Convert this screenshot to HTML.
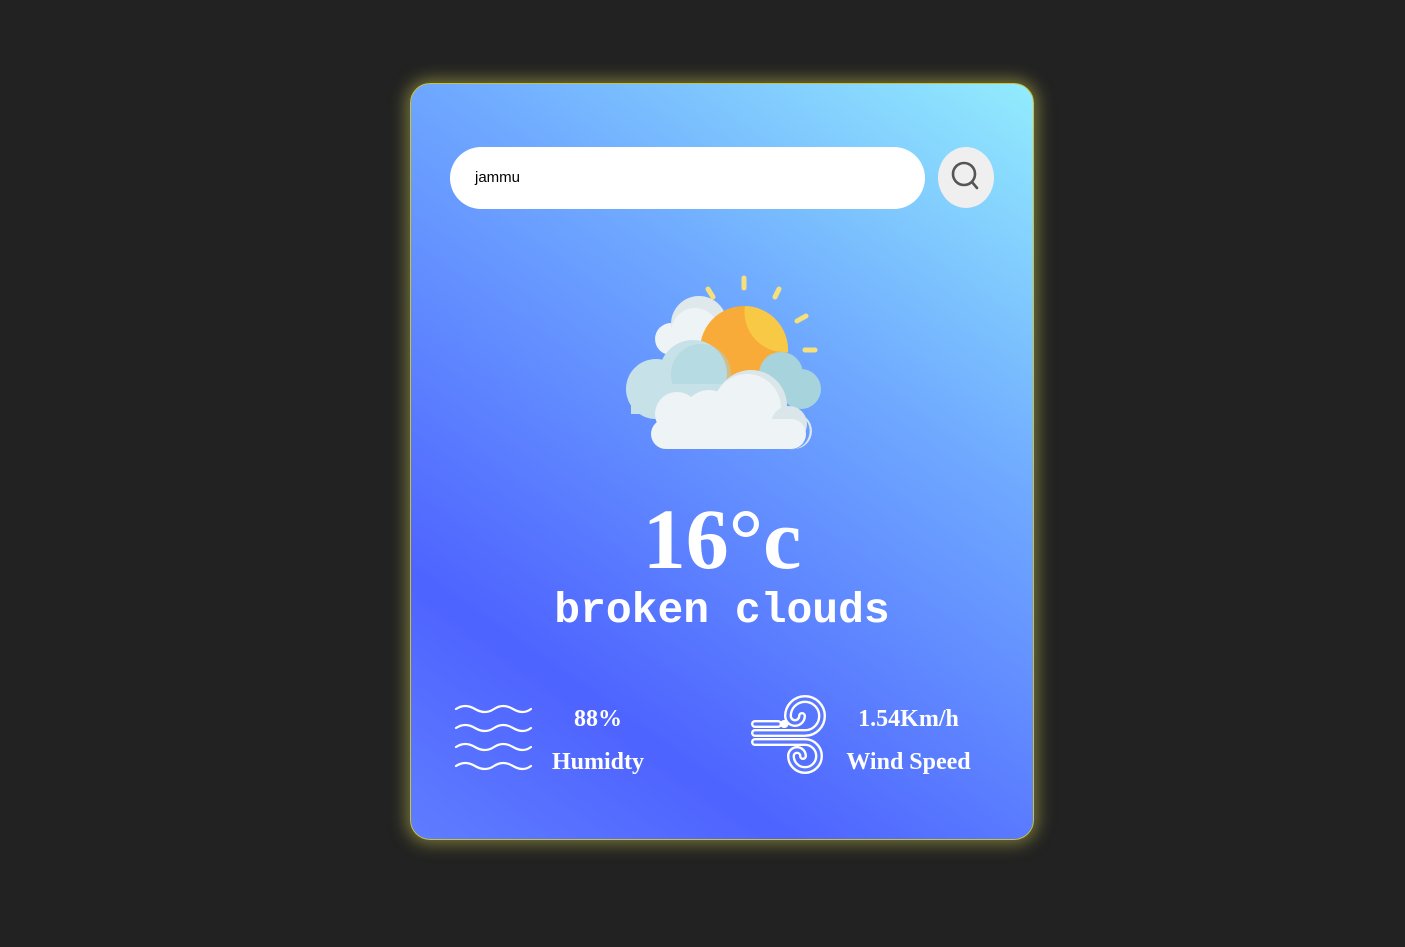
<!DOCTYPE html>
<html><head><style>
html,body{margin:0;padding:0;}
body{width:1405px;height:947px;background:#222222;position:relative;overflow:hidden;font-family:"Liberation Serif",serif;}
.card{position:absolute;left:410px;top:83px;width:622px;height:755px;border:1px solid #c9c23a;border-radius:20px;
background:linear-gradient(215deg,#92ecfd 0%,#6fa9ff 35%,#4e63ff 78%,#5f7dff 100%);box-shadow:0 0 16px 4px rgba(200,195,80,0.5);}
.inp{position:absolute;left:39px;top:63px;width:475px;height:62px;border-radius:31px;background:#fff;}
.inp span{position:absolute;left:25px;top:22px;font:15px "Liberation Sans",sans-serif;color:#000;}
.btn{position:absolute;left:527px;top:63px;width:56px;height:61px;border-radius:50%;background:#efefef;}
.t{position:absolute;color:#fff;font-weight:bold;text-align:center;white-space:nowrap;}
</style></head><body>
<div class="card">
<div class="inp"><span>jammu</span></div>
<div class="btn"><svg width="56" height="61" viewBox="0 0 56 61"><circle cx="26" cy="27" r="11" fill="none" stroke="#555" stroke-width="2.6"/><line x1="34" y1="35" x2="39" y2="41" stroke="#555" stroke-width="2.6" stroke-linecap="round"/></svg></div>
<svg style="position:absolute;left:200px;top:180px" width="240" height="200" viewBox="0 0 240 200">
<g stroke="#f7e07a" stroke-width="5" stroke-linecap="round">
<line x1="133" y1="14" x2="133" y2="24"/><line x1="97" y1="25" x2="102" y2="33"/><line x1="168" y1="25" x2="164" y2="33"/><line x1="195" y1="52" x2="186" y2="57"/><line x1="204" y1="86" x2="194" y2="86"/></g>
<circle cx="60" cy="75" r="16" fill="#eef3f5"/><circle cx="88" cy="60" r="28" fill="#dfe9ec"/><circle cx="84" cy="68" r="24" fill="#eef3f5"/>
<circle cx="133" cy="86" r="44" fill="#f9ab3a"/>
<path d="M134 42 a44 44 0 0 1 43 46 a40 40 0 0 1 -43 -46z" fill="#f8c944"/>
<circle cx="190" cy="125" r="20" fill="#a7d4dc"/><circle cx="170" cy="110" r="22" fill="#a7d4dc"/>
<circle cx="45" cy="125" r="30" fill="#c6e2e8"/><circle cx="82" cy="110" r="34" fill="#c6e2e8"/><circle cx="90" cy="110" r="30" fill="#a7d4dc" opacity="0.5"/>
<rect x="20" y="120" width="110" height="30" fill="#c6e2e8"/>
<circle cx="66" cy="150" r="22" fill="#eef3f5"/><circle cx="140" cy="142" r="36" fill="#dbe6ea"/><circle cx="136" cy="144" r="34" fill="#eef3f5"/>
<circle cx="98" cy="152" r="26" fill="#eef3f5"/><circle cx="178" cy="160" r="18" fill="#dbe6ea"/>
<rect x="40" y="155" width="155" height="30" rx="15" fill="#eef3f5"/>
<path d="M178 185 a18 18 0 0 0 5 -36 a18 18 0 0 1 0 36z" fill="#dbe6ea"/>
</svg>
<div class="t" style="left:0;width:622px;top:405px;font-size:86px;line-height:100px;">16°c</div>
<div class="t" style="left:0;width:622px;top:502px;font:bold 43px 'Liberation Mono',monospace;line-height:50px;">broken clouds</div>
<svg style="position:absolute;left:43px;top:618px" width="80" height="70" viewBox="0 0 80 70">
<g fill="none" stroke="#fff" stroke-width="2.2" stroke-linecap="round">
<path id="w" d="M2 7 q9 -6 19 0 t19 0 t19 0 t18 0"/>
<use href="#w" y="19"/><use href="#w" y="38"/><use href="#w" y="57"/></g></svg>
<div class="t" style="left:130px;width:114px;top:622px;font-size:24px;">88%</div>
<div class="t" style="left:130px;width:114px;top:665px;font-size:24px;">Humidty</div>
<svg style="position:absolute;left:337px;top:610px" width="85" height="85" viewBox="0 0 85 85">
<g fill="none" stroke-linecap="round">
<g stroke="#fff" stroke-width="8">
<path d="M7 39 H57 A17 17 0 0 0 57 5 A17 17 0 0 0 40 22 A7 7 0 0 0 54 22"/>
<path d="M7 48 H57 A14 14 0 0 1 57 76 A14 14 0 0 1 43 62 A6 6 0 0 1 55 62"/>
<path d="M7 30 H30"/><path d="M36 30 H36.5"/>
</g>
<g stroke="#5a78ff" stroke-width="3.2">
<path d="M7 39 H57 A17 17 0 0 0 57 5 A17 17 0 0 0 40 22 A7 7 0 0 0 54 22"/>
<path d="M7 48 H57 A14 14 0 0 1 57 76 A14 14 0 0 1 43 62 A6 6 0 0 1 55 62"/>
<path d="M7 30 H30"/>
</g></g></svg>
<div class="t" style="left:425px;width:145px;top:622px;font-size:24px;">1.54Km/h</div>
<div class="t" style="left:425px;width:145px;top:665px;font-size:24px;">Wind Speed</div>
</div>
</body></html>
